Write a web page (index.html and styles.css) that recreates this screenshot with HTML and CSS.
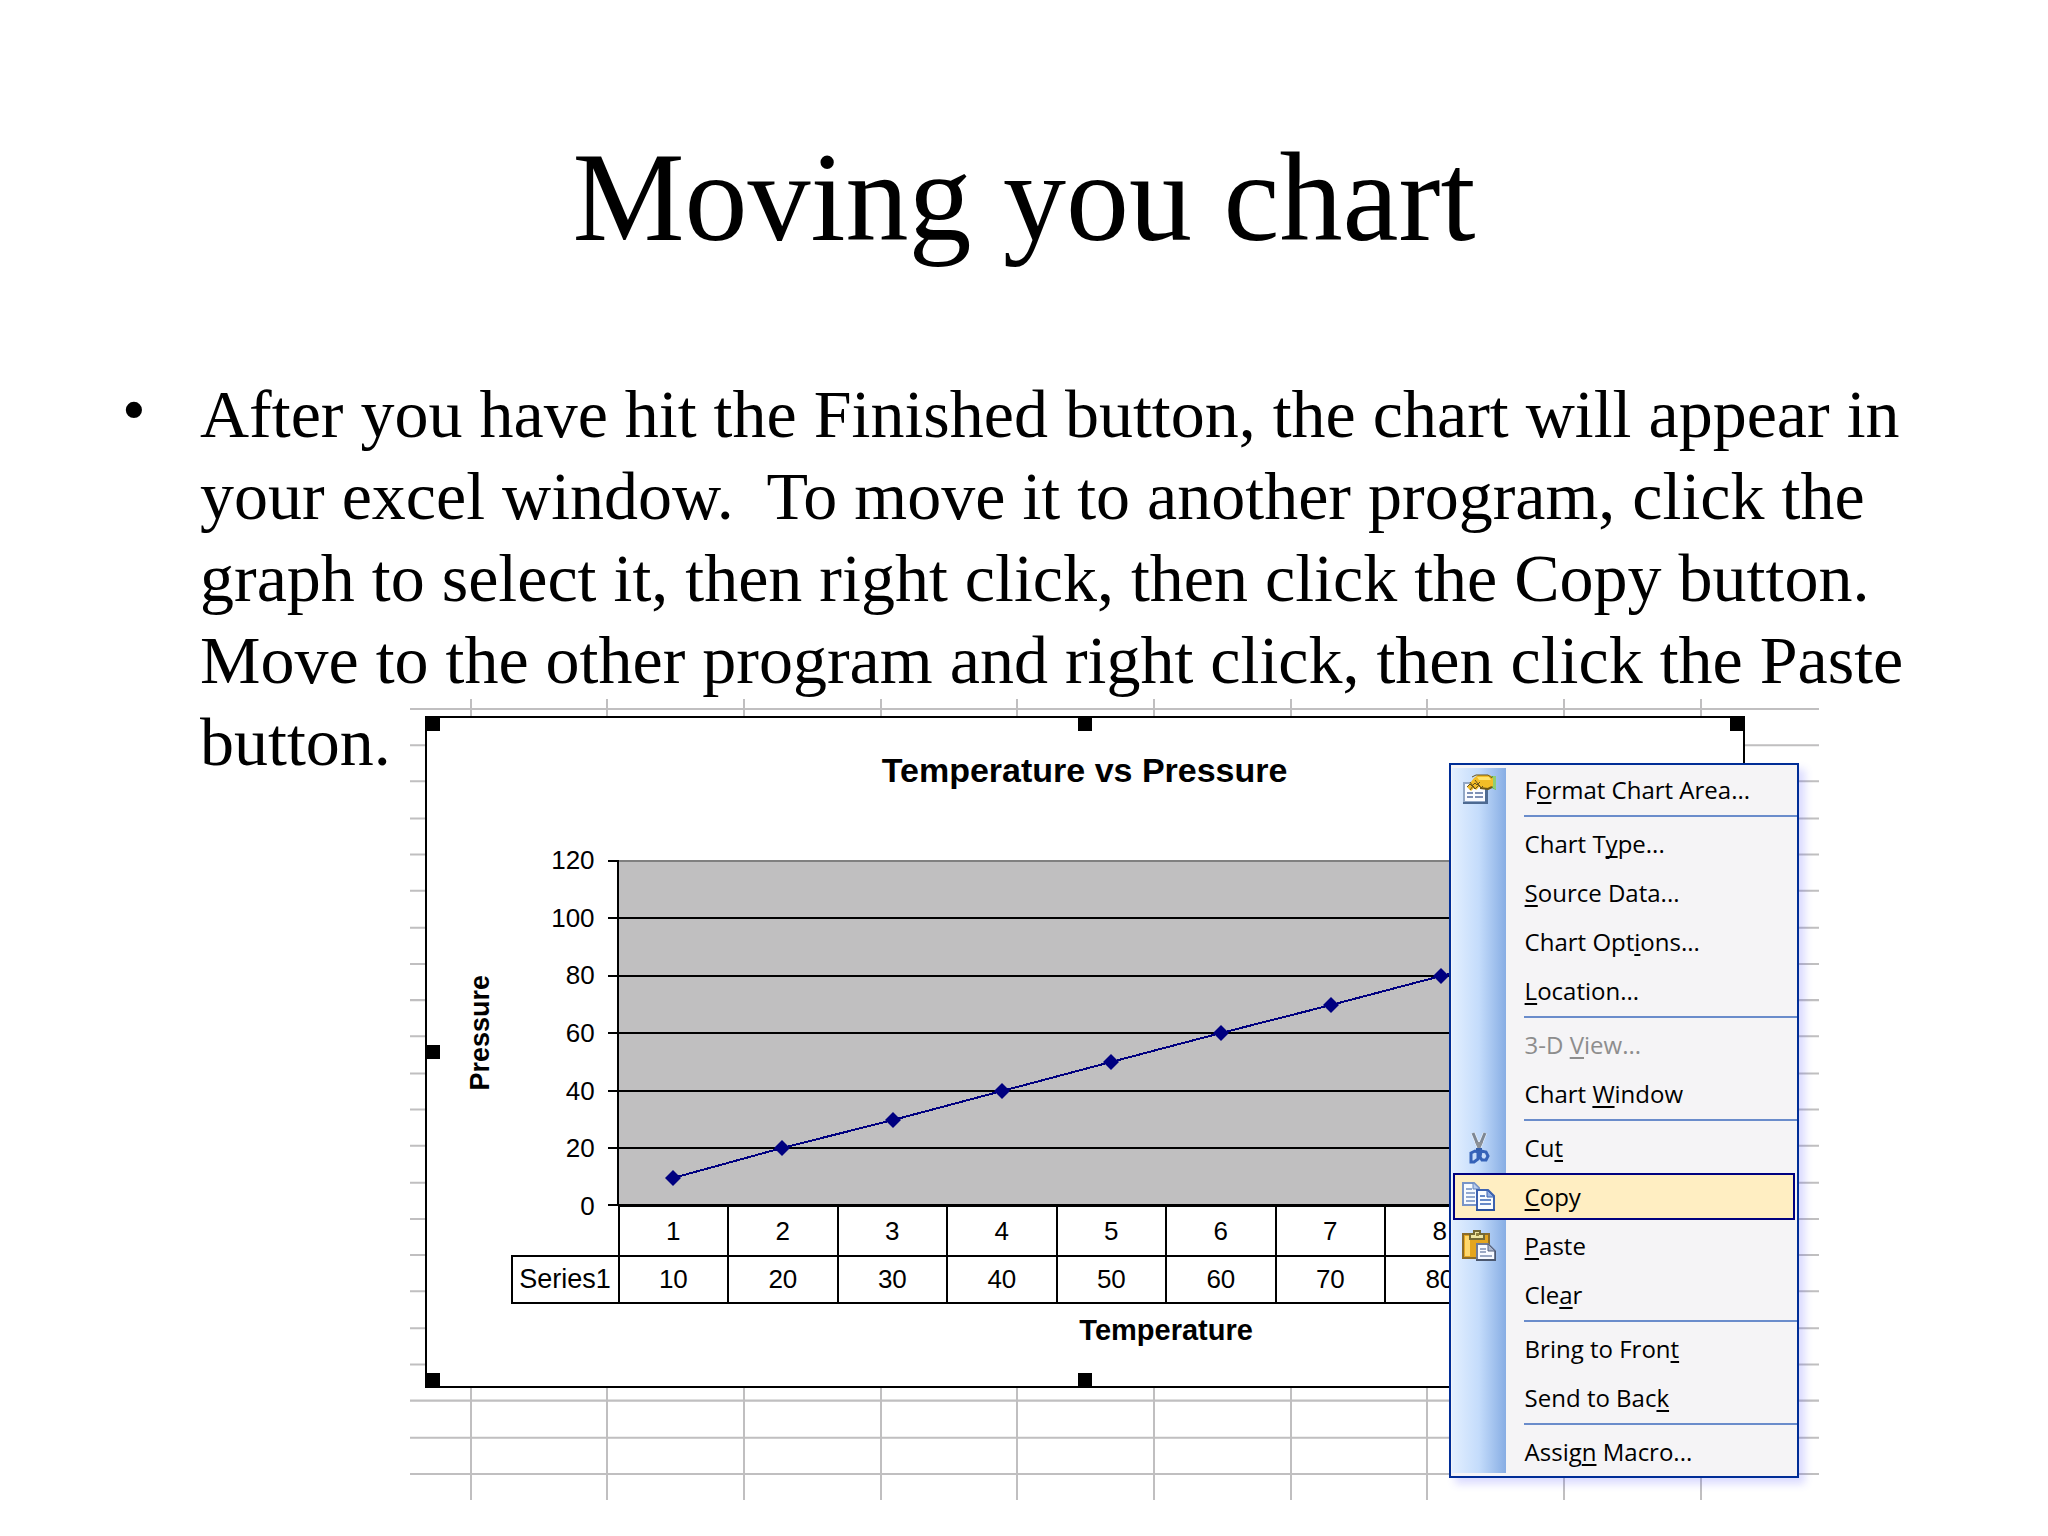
FILE: index.html
```
<!DOCTYPE html>
<html lang="en">
<head>
  <meta charset="UTF-8">
  <meta name="viewport" content="width=device-width, initial-scale=1.0">
  <title>Moving you chart</title>
  <link rel="stylesheet" href="styles.css">
</head>
<body>
  <main class="slide">
    <h1>Moving you chart</h1>

    <ul class="bullets">
      <li>After you have hit the Finished button, the chart will appear in your excel window.&nbsp; To move it to another program, click the graph to select it, then right click, then click the Copy button.&nbsp; Move to the other program and right click, then click the Paste button.</li>
    </ul>

    <section class="sheet">
      <!-- worksheet cells -->
      <svg class="cells" viewBox="0 0 1409 798" preserveAspectRatio="none" aria-hidden="true">
        <path d="M61 0V798M197 0V798M334 0V798M471 0V798M607 0V798M744 0V798M881 0V798M1017 0V798M1154 0V798M1291 0V798"/>
        <path d="M0 10H1409M0 46H1409M0 82H1409M0 119H1409M0 155H1409M0 191H1409M0 228H1409M0 264H1409M0 300H1409M0 336H1409M0 373H1409M0 409H1409M0 445H1409M0 482H1409M0 518H1409M0 554H1409M0 590H1409M0 627H1409M0 663H1409M0 699H1409M0 736H1409M0 772H1409"/>
      </svg>

      <div class="chart">
        <h2>Temperature vs Pressure</h2>
        <div class="y-title"><span>Pressure</span></div>
        <div class="y-axis">
          <span>120</span>
          <span>100</span>
          <span>80</span>
          <span>60</span>
          <span>40</span>
          <span>20</span>
          <span>0</span>
        </div>
        <svg class="plot" viewBox="0 0 1097 346" preserveAspectRatio="none" role="img" aria-label="Line chart of Series1">
          <rect width="1097" height="346" fill="#c0bfc0"/>
          <path d="M0 1H1097" stroke="#808080" stroke-width="2"/>
          <path class="axis" d="M-10 1H0M-10 58H1097M-10 116H1097M-10 173H1097M-10 231H1097M-10 288H1097M-10 345H1097M0 0V346"/>
          <path class="series" d="M55 318L164 288L275 260L384 231L493 202L603 173L713 145L823 116L933 87L1042 58"/>
          <g fill="#000080">
            <path d="M55 310l8 8-8 8-8-8z"/>
            <path d="M164 280l8 8-8 8-8-8z"/>
            <path d="M275 252l8 8-8 8-8-8z"/>
            <path d="M384 223l8 8-8 8-8-8z"/>
            <path d="M493 194l8 8-8 8-8-8z"/>
            <path d="M603 165l8 8-8 8-8-8z"/>
            <path d="M713 137l8 8-8 8-8-8z"/>
            <path d="M823 108l8 8-8 8-8-8z"/>
            <path d="M933 79l8 8-8 8-8-8z"/>
            <path d="M1042 50l8 8-8 8-8-8z"/>
          </g>
        </svg>
        <table class="data">
          <tr>
            <td class="corner"></td>
            <th>1</th><th>2</th><th>3</th><th>4</th><th>5</th><th>6</th><th>7</th><th>8</th><th></th><th></th>
          </tr>
          <tr>
            <th class="name">Series1</th>
            <td>10</td><td>20</td><td>30</td><td>40</td><td>50</td><td>60</td><td>70</td><td>80</td><td></td><td></td>
          </tr>
        </table>
        <div class="x-title">Temperature</div>

        <i class="handle top left"></i>
        <i class="handle top center"></i>
        <i class="handle top right"></i>
        <i class="handle middle left"></i>
        <i class="handle middle right"></i>
        <i class="handle bottom left"></i>
        <i class="handle bottom center"></i>
        <i class="handle bottom right"></i>
      </div>

      <div class="menu" role="menu">
        <button type="button" role="menuitem">
          <svg class="icon" viewBox="0 0 34 34" aria-hidden="true">
            <path d="M1 9h25v22H1z" fill="#4d6a92"/>
            <path d="M1 9h22v20H1z" fill="#93a8c6"/>
            <path d="M3 11h20v17H3z" fill="#fbfcff"/>
            <path d="M5 20h6M13 20h8M5 24h6M13 24h8" stroke="#7e90b5" stroke-width="2"/>
            <path d="M28 3h6v14l-6-3z" fill="#4ea64b"/>
            <path d="M31 3h3v14l-3-2z" fill="#8fce72"/>
            <path d="M5 14l7-9 4-3h12l3 3v8l-4 3h-6l-4-2-3 3-2-2-3 3z" fill="#f3bd27"/>
            <path d="M15 4h12l2 3H17z" fill="#ffe36c"/>
            <path d="M10 4l4-2h12l4 3M5 14l3-3 2 2 3-3 2 2 3-3M8 17l3-4 2 3 4-4 2 3 2-2M8 9l5 7M13 7l6 8" fill="none" stroke="#67531c" stroke-width="1"/>
            <path d="M18 15l8 1 4-2" fill="none" stroke="#6e5614" stroke-width="2"/>
          </svg>
          <span>F<u>o</u>rmat Chart Area...</span>
        </button>
        <hr>
        <button type="button" role="menuitem"><i class="icon"></i><span>Chart T<u>y</u>pe...</span></button>
        <button type="button" role="menuitem"><i class="icon"></i><span><u>S</u>ource Data...</span></button>
        <button type="button" role="menuitem"><i class="icon"></i><span>Chart Opt<u>i</u>ons...</span></button>
        <button type="button" role="menuitem"><i class="icon"></i><span><u>L</u>ocation...</span></button>
        <hr>
        <button type="button" role="menuitem" disabled><i class="icon"></i><span>3-D <u>V</u>iew...</span></button>
        <button type="button" role="menuitem"><i class="icon"></i><span>Chart <u>W</u>indow</span></button>
        <hr>
        <button type="button" role="menuitem">
          <svg class="icon" viewBox="0 0 34 34" aria-hidden="true">
            <path d="M11 2l7 17M23 2l-7 17" stroke="#f4f7fa" stroke-width="4"/>
            <path d="M11 2l7 17M23 2l-7 17" stroke="#7d8794" stroke-width="3"/>
            <path d="M13 11l4 8 4-8" fill="#8b9096"/>
            <path d="M14 17h6v5h-6z" fill="#315ca9"/>
            <path d="M9 22l4-2 3 1v7l-4 3H9zM19 20l5 1 2 4-2 4h-4l-2-3z" fill="#c8ddfa" stroke="#3562b8" stroke-width="3"/>
          </svg>
          <span>Cu<u>t</u></span>
        </button>
        <button type="button" role="menuitem" class="active">
          <svg class="icon" viewBox="0 0 34 34" aria-hidden="true">
            <path d="M1 3h11l5 5v17H1z" fill="#f7fbff" stroke="#7894c7" stroke-width="2"/>
            <path d="M11 3v6h6" fill="#b9cdef" stroke="#6584bd" stroke-width="1"/>
            <path d="M4 9h6M4 13h9M4 17h9M4 21h9" stroke="#92a9d0" stroke-width="2"/>
            <path d="M15 10h11l6 6v14H15z" fill="#f9fcff" stroke="#3d62b0" stroke-width="2"/>
            <path d="M25 10v7h7z" fill="#92b1e6" stroke="#3d62b0" stroke-width="1"/>
            <path d="M18 16h5M18 20h11M18 24h11" stroke="#6689c8" stroke-width="2"/>
            <path d="M14 30h19" stroke="#2b519f" stroke-width="2"/>
          </svg>
          <span><u>C</u>opy</span>
        </button>
        <button type="button" role="menuitem">
          <svg class="icon" viewBox="0 0 34 34" aria-hidden="true">
            <path d="M1 5h26v24H1z" fill="#e4a51d" stroke="#8b6c2a" stroke-width="2"/>
            <path d="M3 7h5v20H3z" fill="#ffd86c"/>
            <path d="M8 5h4V2h6v3h4v5H8z" fill="#eee4a0" stroke="#756934" stroke-width="2"/>
            <path d="M14 4h3v3h-3z" fill="#91823d"/>
            <path d="M15 15h11l7 7v9H15z" fill="#f8faff" stroke="#707b94" stroke-width="2"/>
            <path d="M26 15v7h7z" fill="#a9b5cd" stroke="#566381" stroke-width="1"/>
            <path d="M18 20h6M18 23h6M18 27h12" stroke="#9ba8c4" stroke-width="2"/>
            <path d="M14 31h20V22" fill="none" stroke="#4b5870" stroke-width="2"/>
          </svg>
          <span><u>P</u>aste</span>
        </button>
        <button type="button" role="menuitem"><i class="icon"></i><span>Cle<u>a</u>r</span></button>
        <hr>
        <button type="button" role="menuitem"><i class="icon"></i><span>Bring to Fron<u>t</u></span></button>
        <button type="button" role="menuitem"><i class="icon"></i><span>Send to Bac<u>k</u></span></button>
        <hr>
        <button type="button" role="menuitem"><i class="icon"></i><span>Assig<u>n</u> Macro...</span></button>
      </div>
    </section>
  </main>
</body>
</html>
```
FILE: styles.css
```
* {
  box-sizing: border-box;
}

body {
  margin: 0;
  background: #fff;
  color: #000;
  font-family: "Liberation Serif", serif;
}

.slide {
  padding-top: 126px;
}

h1 {
  margin: 0 0 103px;
  font-size: 126px;
  font-weight: normal;
  line-height: 144px;
  text-align: center;
}

.bullets {
  margin: 0;
  padding: 0 120px 0 200px;
  list-style: none;
  font-size: 68px;
  line-height: 82px;
}

.bullets li {
  position: relative;
}

.bullets li::before {
  content: "•";
  position: absolute;
  left: -78px;
  line-height: 72px;
}

/* worksheet */
.sheet {
  position: relative;
  width: 68.8%;
  margin: -84px 0 0 20%;
  padding: 17px 74px 112px 15px;
  font-family: "Liberation Sans", sans-serif;
}

.cells {
  position: absolute;
  inset: 0;
  width: 100%;
  height: 100%;
}

.cells path {
  fill: none;
  stroke: #c0bfc0;
  stroke-width: 2;
}

/* chart */
.chart {
  position: relative;
  display: grid;
  grid-template-columns: 84px 107px 1fr;
  grid-template-rows: auto 346px auto auto;
  padding: 32px 28px 36px 0;
  border: 2px solid #000;
  background: #fff;
  font-size: 26px;
}

.chart h2 {
  grid-column: 1 / -1;
  margin: 0 -28px 70px 0;
  font-size: 34px;
  line-height: 40px;
  text-align: center;
}

.y-title {
  display: flex;
  align-items: center;
  justify-content: center;
  padding-left: 24px;
  font-size: 27px;
  font-weight: bold;
}

.y-title span {
  writing-mode: vertical-rl;
  transform: rotate(180deg);
}

.y-axis {
  display: flex;
  flex-direction: column;
  justify-content: space-between;
  margin: -15px 0;
  padding-right: 23px;
  line-height: 30px;
  text-align: right;
}

.plot {
  width: 100%;
  height: 100%;
  overflow: visible;
}

.axis {
  fill: none;
  stroke: #000;
  stroke-width: 2;
}

.series {
  fill: none;
  stroke: #000080;
  stroke-width: 2;
  shape-rendering: crispEdges;
}

.data {
  grid-column: 2 / 4;
  width: 100%;
  margin-top: -1px;
  border-collapse: collapse;
  table-layout: fixed;
}

.data th,
.data td {
  height: 47px;
  padding: 0;
  border: 2px solid #000;
  font-weight: normal;
  text-align: center;
}

.data .corner {
  width: 107px;
  height: 50px;
  border-top: none;
  border-left: none;
}

.data .name {
  font-size: 27px;
}

.x-title {
  grid-column: 3;
  padding-top: 6px;
  font-size: 29px;
  font-weight: bold;
  line-height: 40px;
  text-align: center;
}

/* selection handles */
.handle {
  position: absolute;
  width: 14px;
  height: 14px;
  background: #000;
}

.handle.top {
  top: -1px;
}

.handle.middle {
  top: calc(50% - 7px);
}

.handle.bottom {
  bottom: -1px;
}

.handle.left {
  left: -1px;
}

.handle.center {
  left: calc(50% - 7px);
}

.handle.right {
  right: -1px;
}

/* context menu */
.menu {
  position: absolute;
  top: 64px;
  right: 20px;
  display: flex;
  flex-direction: column;
  width: 350px;
  border: 2px solid #002d96;
  background: linear-gradient(to right, #e3efff, #c4dcfb 50%, #87ade4) 1px 3px / 54px calc(100% - 6px) no-repeat #f5f4f6;
  box-shadow: 6px 6px 8px rgba(80, 80, 255, 0.2);
}

.menu button {
  display: flex;
  align-items: center;
  gap: 29px;
  height: 47px;
  margin: 1px 2px;
  padding: 0 0 0 7px;
  border: 2px solid transparent;
  background: none;
  color: #000;
  font-family: "Open Sans", sans-serif;
  font-size: 24px;
  text-align: left;
}

.menu button:disabled {
  color: #8d8d8d;
}

.menu button.active {
  border-color: #000080;
  background: #ffeec2;
}

.menu hr {
  height: 2px;
  margin: 1px 0 2px 73px;
  border: none;
  background: #6a8ccb;
}

.menu u {
  text-decoration-thickness: 2px;
  text-decoration-skip-ink: none;
  text-underline-offset: 3px;
}

.icon {
  flex: none;
  width: 34px;
  height: 34px;
}
```
